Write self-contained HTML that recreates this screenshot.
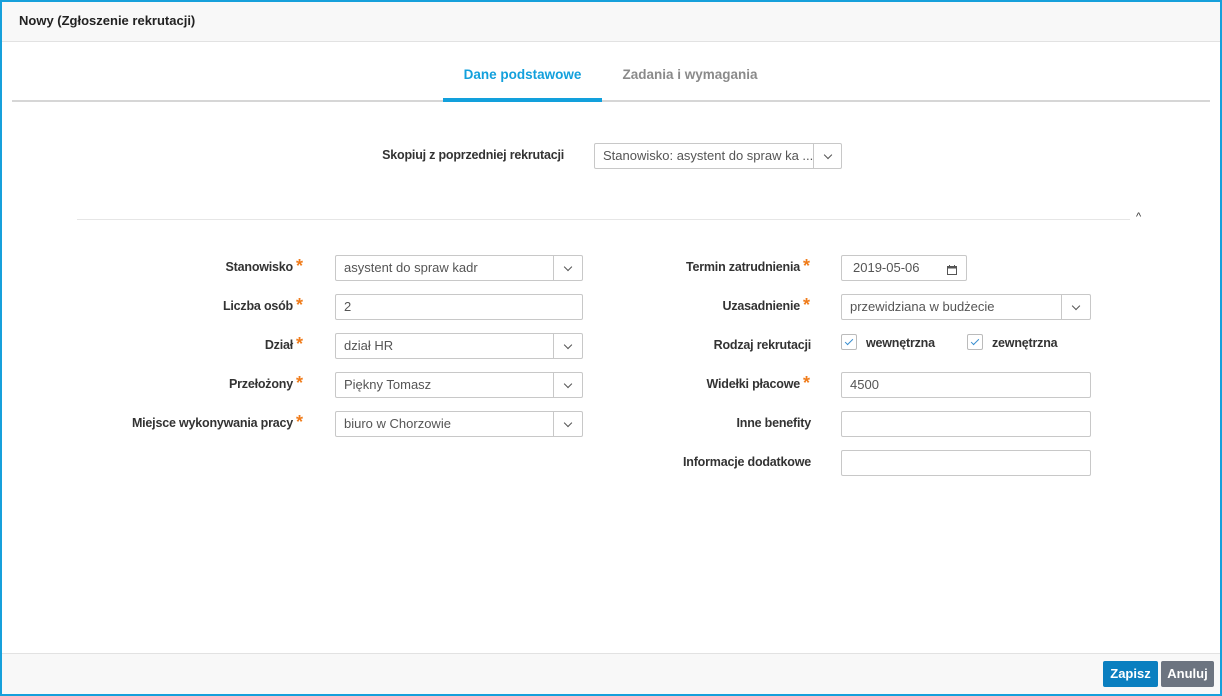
<!DOCTYPE html>
<html><head><meta charset="utf-8"><style>
*{box-sizing:border-box;margin:0;padding:0}
body{width:1222px;height:696px;position:relative;overflow:hidden;background:#fff;font-family:"Liberation Sans",sans-serif;color:#333;font-size:13px}
.frame{position:absolute;left:0;top:0;width:1222px;height:696px;border:2px solid #16a0db;border-bottom-width:2px}
.a{position:absolute}
.hdr{left:2px;top:2px;width:1218px;height:40px;background:#f8f8f8;border-bottom:1px solid #e2e2e2}
.ftr{left:2px;top:653px;width:1218px;height:41px;background:#f8f8f8;border-top:1px solid #e2e2e2}
.lbl{font-weight:bold;font-size:12.5px;color:#333;text-align:right;white-space:nowrap;letter-spacing:-0.2px}
.st{color:#f07c1b;font-size:18px;font-weight:bold;position:absolute;line-height:18px}
.in{border:1px solid #c8c8c8;border-radius:2px;height:26px;background:#fff;font-size:13px;color:#555;padding-left:8px;line-height:24px;white-space:nowrap;overflow:hidden}
.dd{position:absolute;top:0;right:0;width:29px;height:24px;border-left:1px solid #c8c8c8}
.dd:after{content:"";position:absolute;left:11px;top:8px;width:5px;height:5px;border-right:1.3px solid #555;border-bottom:1.3px solid #555;transform:rotate(45deg)}
.cb{width:16px;height:16px;border:1px solid #bbb;border-radius:2px}
.cb:after{content:"";position:absolute;left:5px;top:2px;width:3px;height:7px;border-right:1.2px solid #3a8fd0;border-bottom:1.2px solid #3a8fd0;transform:rotate(45deg)}
.btn{color:#fff;font-weight:bold;font-size:13px;text-align:center;line-height:26px;border-radius:2px;height:26px}
</style></head><body>
<div class="frame"></div>
<div class="a hdr"></div>
<div class="a" style="left:19px;top:13px;font-weight:bold;font-size:13px;color:#222">Nowy (Zgłoszenie rekrutacji)</div>

<div class="a" style="left:12px;top:100px;width:1198px;height:2px;background:#d6d6d6"></div>
<div class="a" style="left:443px;top:98px;width:159px;height:4px;background:#12a0dc"></div>
<div class="a" style="left:443px;top:67px;width:159px;text-align:center;color:#12a0dc;font-weight:bold;font-size:13.5px">Dane podstawowe</div>
<div class="a" style="left:610px;top:67px;width:160px;text-align:center;color:#8a8a8a;font-weight:bold;font-size:13.5px">Zadania i wymagania</div>

<div class="a lbl" style="right:658px;top:148px">Skopiuj z poprzedniej rekrutacji</div>
<div class="a in" style="left:594px;top:143px;width:248px">Stanowisko: asystent do spraw ka ...<div class="dd" style="width:28px"></div></div>

<div class="a" style="left:77px;top:219px;width:1053px;height:1px;background:#e6e6e6"></div>
<div class="a" style="left:1136px;top:211px;font-size:11px;color:#333">^</div>

<!-- left -->
<div class="a lbl" style="right:929px;top:260px">Stanowisko</div><div class="st" style="left:296px;top:257px">*</div>
<div class="a in" style="left:335px;top:255px;width:248px">asystent do spraw kadr<div class="dd"></div></div>
<div class="a lbl" style="right:929px;top:299px">Liczba osób</div><div class="st" style="left:296px;top:296px">*</div>
<div class="a in" style="left:335px;top:294px;width:248px">2</div>
<div class="a lbl" style="right:929px;top:338px">Dział</div><div class="st" style="left:296px;top:335px">*</div>
<div class="a in" style="left:335px;top:333px;width:248px">dział HR<div class="dd"></div></div>
<div class="a lbl" style="right:929px;top:377px">Przełożony</div><div class="st" style="left:296px;top:374px">*</div>
<div class="a in" style="left:335px;top:372px;width:248px">Piękny Tomasz<div class="dd"></div></div>
<div class="a lbl" style="right:929px;top:416px">Miejsce wykonywania pracy</div><div class="st" style="left:296px;top:413px">*</div>
<div class="a in" style="left:335px;top:411px;width:248px">biuro w Chorzowie<div class="dd"></div></div>

<!-- right -->
<div class="a lbl" style="right:422px;top:260px">Termin zatrudnienia</div><div class="st" style="left:803px;top:257px">*</div>
<div class="a in" style="left:841px;top:255px;width:126px;padding-left:11px">2019-05-06
<svg class="a" style="left:105px;top:9px" width="10" height="10" viewBox="0 0 10 10"><rect x="0.5" y="1.5" width="9" height="8" fill="none" stroke="#555"/><rect x="0.5" y="1.5" width="9" height="2" fill="#555"/><rect x="2" y="0" width="1" height="2" fill="#555"/><rect x="7" y="0" width="1" height="2" fill="#555"/></svg></div>
<div class="a lbl" style="right:422px;top:299px">Uzasadnienie</div><div class="st" style="left:803px;top:296px">*</div>
<div class="a in" style="left:841px;top:294px;width:250px">przewidziana w budżecie<div class="dd"></div></div>
<div class="a lbl" style="right:411px;top:338px">Rodzaj rekrutacji</div>
<div class="a cb" style="left:841px;top:334px"></div>
<div class="a lbl" style="left:866px;top:336px">wewnętrzna</div>
<div class="a cb" style="left:967px;top:334px"></div>
<div class="a lbl" style="left:992px;top:336px">zewnętrzna</div>
<div class="a lbl" style="right:422px;top:377px">Widełki płacowe</div><div class="st" style="left:803px;top:374px">*</div>
<div class="a in" style="left:841px;top:372px;width:250px">4500</div>
<div class="a lbl" style="right:411px;top:416px">Inne benefity</div>
<div class="a in" style="left:841px;top:411px;width:250px"></div>
<div class="a lbl" style="right:411px;top:455px">Informacje dodatkowe</div>
<div class="a in" style="left:841px;top:450px;width:250px"></div>

<div class="a ftr"></div>
<div class="a btn" style="left:1103px;top:661px;width:55px;background:#0a7fc0">Zapisz</div>
<div class="a btn" style="left:1161px;top:661px;width:53px;background:#6c7480">Anuluj</div>
</body></html>
